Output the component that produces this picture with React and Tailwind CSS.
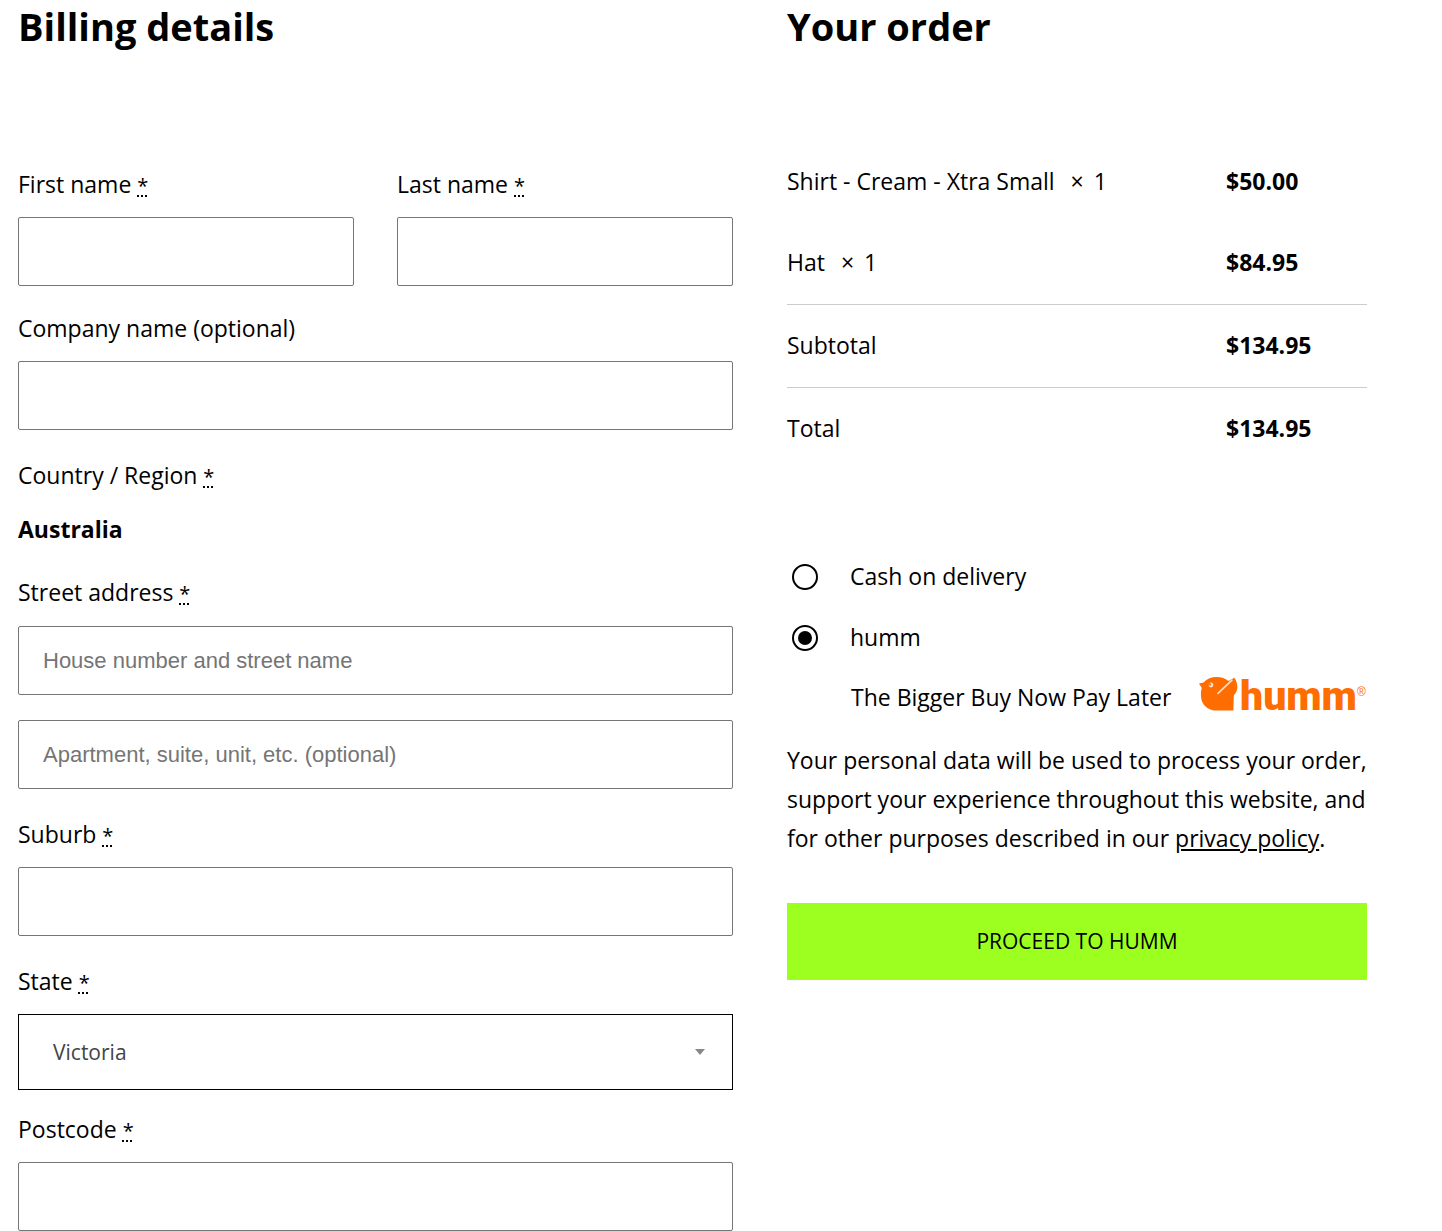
import { useState } from "react";

function Required() {
  return (
    <abbr title="required" className="text-[20px] leading-none underline decoration-dotted decoration-2 underline-offset-2">
      *
    </abbr>
  );
}

function Field({ id, label, required, className = "" }) {
  return (
    <div className={className}>
      <label htmlFor={id} className="mb-[13px] block">
        {label} {required && <Required />}
      </label>
      <TextBox id={id} />
    </div>
  );
}

function TextBox({ className = "", ...props }) {
  return (
    <input
      type="text"
      className={`block h-[69px] w-full rounded-[2px] border border-[#767676] bg-white px-6 font-['Liberation_Sans',sans-serif] text-[22px] placeholder:text-[#757575] ${className}`}
      {...props}
    />
  );
}

function HummLogo() {
  return (
    <svg role="img" aria-label="humm" viewBox="0 -1 170 38" className="h-[38px] w-[170px] shrink-0">
      <g fill="#ff6c00">
        <path d="M2 7.5 L6.5 6.4 C10 2.6 14.5 1 19.5 1 C24.5 1 28.5 2.4 31.4 5 L37.4 1.8 C41.4 8 41.6 14.6 36.8 19.6 L36.4 34.6 H20 C10.5 34.6 4.4 28.4 4 20.4 C3.8 17 4 14.4 4.8 12 Z" />
        <text x="43" y="34" fontSize="41" fontWeight="900" fontFamily="Roboto, sans-serif">
          humm
        </text>
        <text x="160" y="20" fontSize="12" fontFamily="Liberation Sans, sans-serif">
          ®
        </text>
      </g>
      <path d="M21 17.4 L35 4.2" stroke="#ffe0c7" strokeWidth="1.6" strokeLinecap="round" />
      <circle cx="14" cy="9" r="2.4" fill="#ffe0c7" />
      <circle cx="12.8" cy="8.4" r="1.2" fill="#ff6c00" />
    </svg>
  );
}

const items = [
  { name: "Shirt - Cream - Xtra Small", qty: 1, price: "$50.00" },
  { name: "Hat", qty: 1, price: "$84.95" },
];

function OrderTable() {
  return (
    <table className="w-full table-fixed border-collapse text-left">
      <colgroup>
        <col className="w-3/4" />
        <col />
      </colgroup>
      <tbody>
        {items.map((item) => (
          <tr key={item.name} className="h-[82px]">
            <td>
              {item.name}&nbsp; <span className="mx-1">×</span> {item.qty}
            </td>
            <td className="pl-1 font-bold">{item.price}</td>
          </tr>
        ))}
        <tr className="h-[83px] border-y border-[#ccc]">
          <th scope="row" className="font-normal">Subtotal</th>
          <td className="pl-1 font-bold">$134.95</td>
        </tr>
        <tr className="h-[83px]">
          <th scope="row" className="font-normal">Total</th>
          <td className="pl-1 font-bold">$134.95</td>
        </tr>
      </tbody>
    </table>
  );
}

function PaymentOption({ id, label, checked, onSelect }) {
  return (
    <div className="flex items-center">
      <input
        type="radio"
        id={id}
        name="payment"
        checked={checked}
        onChange={onSelect}
        className="ml-[5px] size-[26px] appearance-none rounded-full border-2 border-black bg-white bg-clip-content p-1 checked:bg-black"
      />
      <label htmlFor={id} className="pl-8">
        {label}
      </label>
    </div>
  );
}

export default function App() {
  const [payment, setPayment] = useState("humm");
  return (
    <main className="grid grid-cols-[715fr_580fr] items-start gap-x-[54px] bg-white pr-[75px] pl-[18px] font-['Open_Sans',sans-serif] text-[23px] leading-[39px] text-black">
      <section>
        <h2 className="mb-[113px] text-[38px] leading-[52px] font-bold">Billing details</h2>
        <form>
          <div className="mb-[23px] grid grid-cols-2 gap-x-[43px]">
            <Field id="first-name" label="First name" required />
            <Field id="last-name" label="Last name" required />
          </div>
          <Field id="company" label="Company name (optional)" className="mb-[26px]" />
          <p>
            Country / Region <Required />
          </p>
          <p className="mt-[15px] mb-6 font-bold">Australia</p>
          <label htmlFor="street" className="mb-[14px] block">
            Street address <Required />
          </label>
          <TextBox id="street" placeholder="House number and street name" />
          <TextBox
            aria-label="Apartment, suite, unit, etc. (optional)"
            placeholder="Apartment, suite, unit, etc. (optional)"
            className="mt-[25px] mb-[26px]"
          />
          <Field id="suburb" label="Suburb" required className="mb-[26px]" />
          <label htmlFor="state" className="mb-[13px] block">
            State <Required />
          </label>
          <div className="relative mb-5">
            <select
              id="state"
              defaultValue="Victoria"
              className="block h-[76px] w-full appearance-none border border-black bg-white px-[34px] text-[21px] text-[#444]"
            >
              <option>Victoria</option>
              <option>New South Wales</option>
              <option>Queensland</option>
            </select>
            <svg viewBox="0 0 10 6" className="pointer-events-none absolute top-[35px] right-7 h-1.5 w-2.5" fill="#888">
              <path d="M0 0H10L5 6Z" />
            </svg>
          </div>
          <Field id="postcode" label="Postcode" required />
        </form>
      </section>

      <section>
        <h2 className="mb-[88px] text-[38px] leading-[52px] font-bold">Your order</h2>
        <OrderTable />
        <div role="radiogroup" aria-label="Payment method" className="mt-[87px] flex flex-col gap-[22px]">
          <PaymentOption id="cod" label="Cash on delivery" checked={payment === "cod"} onSelect={() => setPayment("cod")} />
          <PaymentOption id="humm" label="humm" checked={payment === "humm"} onSelect={() => setPayment("humm")} />
        </div>
        <div className="mt-[18px] flex items-start justify-between">
          <p className="pt-[3px] pl-16 whitespace-nowrap">The Bigger Buy Now Pay Later</p>
          <HummLogo />
        </div>
        <p className="mt-6">
          Your personal data will be used to process your order, support your experience throughout this website, and
          for other purposes described in our{" "}
          <a href="#privacy" className="underline underline-offset-2">
            privacy policy
          </a>
          .
        </p>
        <button type="button" className="mt-[45px] h-[77px] w-full bg-[#9dff20] text-[21px]">
          PROCEED TO HUMM
        </button>
      </section>
    </main>
  );
}
